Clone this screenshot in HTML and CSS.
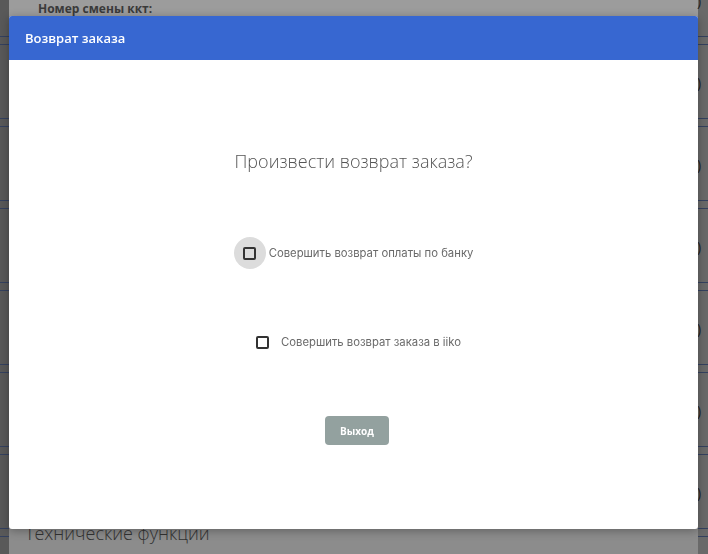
FILE: index.html
```html
<!DOCTYPE html>
<html>
<head>
    <title>Возврат заказа</title>
    <link rel="stylesheet" href="styles.css">
</head>
<body>
    <div class="page">
        <div class="rail rail-left"></div>
        <div class="content">
            <div class="shift-label">Номер смены ккт:</div>
            <div class="section-title">Технические функции</div>
        </div>
        <div class="rail rail-right">
            <div class="mark">)</div>
            <div class="mark">)</div>
            <div class="mark">)</div>
            <div class="mark">)</div>
            <div class="mark">)</div>
            <div class="mark">)</div>
            <div class="mark">)</div>
        </div>
    </div>

    <div class="modal">
        <div class="modal-header">Возврат заказа</div>
        <div class="modal-body">
            <div class="question">Произвести возврат заказа?</div>

            <label class="check-row first">
                <span class="check-wrap active"><span class="check-box"></span></span>
                <span class="check-text">Совершить возврат оплаты по банку</span>
            </label>

            <label class="check-row second">
                <span class="check-wrap"><span class="check-box"></span></span>
                <span class="check-text">Совершить возврат заказа в iiko</span>
            </label>

            <button type="button" class="exit-btn">Выход</button>
        </div>
    </div>
</body>
</html>
```

FILE: styles.css
```css
body {
    margin: 0;
    padding: 0;
    width: 708px;
    height: 554px;
    overflow: hidden;
    font-family: "Open Sans", Arial, sans-serif;
    background: #8c8c8c;
}
.page {
    display: flex;
    height: 554px;
}
.rail {
    background-image: repeating-linear-gradient(to bottom,
        transparent 0px, transparent 36px,
        #34415f 36px, #34415f 37px,
        transparent 37px, transparent 44px,
        #34415f 44px, #34415f 45px,
        transparent 45px, transparent 82px);
}
.rail-left {
    width: 9px;
    background-color: #595959;
}
.rail-right {
    width: 10px;
    background-color: #696969;
    display: flex;
    flex-direction: column;
    padding-top: 0;
}
.mark {
    flex: 0 0 82px;
    font-size: 14px;
    line-height: 14px;
    color: #1e1e1e;
    margin-left: -1px;
    margin-top: -6px;
    margin-bottom: 6px;
}
.content {
    flex: 1;
    display: flex;
    flex-direction: column;
    background: linear-gradient(to bottom, #9c9c9c 0px, #9c9c9c 16px, #8c8c8c 16px);
}
.shift-label {
    padding: 1px 0 0 29px;
    font-size: 12px;
    font-weight: 700;
    line-height: 16px;
    color: #3a3a3a;
}
.section-title {
    margin-top: auto;
    padding: 0 0 8px 16px;
    font-size: 18px;
    font-weight: 300;
    line-height: 26px;
    color: #333;
}

/* dialog */
.modal {
    position: fixed;
    left: 9px;
    top: 16px;
    width: 689px;
    height: 513px;
    background: #fff;
    border-radius: 3px;
    overflow: hidden;
    box-shadow: 0 2px 10px rgba(0, 0, 0, 0.3);
}
.modal-header {
    height: 44px;
    line-height: 44px;
    padding-left: 16px;
    background: #3767d1;
    color: #fff;
    font-size: 13px;
    font-weight: 600;
}
.modal-body {
    display: flex;
    flex-direction: column;
    align-items: center;
    padding-top: 88px;
}
.question {
    font-size: 18px;
    font-weight: 300;
    line-height: 26px;
    color: #555;
}
.check-row {
    display: flex;
    align-items: center;
    gap: 3px;
    height: 32px;
    cursor: pointer;
}
.check-row.first {
    margin-top: 63px;
}
.check-row.second {
    margin-top: 57px;
}
.check-wrap {
    width: 32px;
    height: 32px;
    border-radius: 50%;
    display: flex;
    align-items: center;
    justify-content: center;
}
.check-wrap.active {
    background: #dcdcdc;
}
.check-box {
    width: 9px;
    height: 9px;
    border: 2px solid #333;
    border-radius: 2px;
}
.check-text {
    font-family: Inter, "Open Sans", sans-serif;
    font-size: 11.3px;
    color: #6a6a6a;
}
.exit-btn {
    margin-top: 58px;
    margin-left: 7px;
    width: 64px;
    height: 29px;
    border: none;
    border-radius: 4px;
    background: #93a19f;
    color: #fff;
    font-family: "Open Sans", Arial, sans-serif;
    font-size: 10px;
    font-weight: 700;
}
```
